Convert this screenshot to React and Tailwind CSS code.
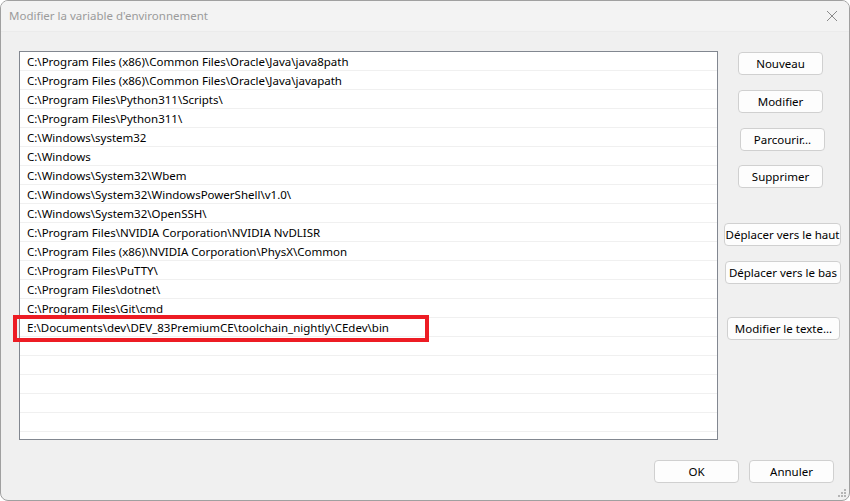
import React from "react";

const paths = [
  "C:\\Program Files (x86)\\Common Files\\Oracle\\Java\\java8path",
  "C:\\Program Files (x86)\\Common Files\\Oracle\\Java\\javapath",
  "C:\\Program Files\\Python311\\Scripts\\",
  "C:\\Program Files\\Python311\\",
  "C:\\Windows\\system32",
  "C:\\Windows",
  "C:\\Windows\\System32\\Wbem",
  "C:\\Windows\\System32\\WindowsPowerShell\\v1.0\\",
  "C:\\Windows\\System32\\OpenSSH\\",
  "C:\\Program Files\\NVIDIA Corporation\\NVIDIA NvDLISR",
  "C:\\Program Files (x86)\\NVIDIA Corporation\\PhysX\\Common",
  "C:\\Program Files\\PuTTY\\",
  "C:\\Program Files\\dotnet\\",
  "C:\\Program Files\\Git\\cmd",
  "E:\\Documents\\dev\\DEV_83PremiumCE\\toolchain_nightly\\CEdev\\bin",
];

const rows = [...paths, ...Array(21 - paths.length).fill("")];

const Btn = ({ children, className = "" }) => (
  <button
    className={`h-[23px] rounded-[4px] border border-[#d0d0d0] bg-[#fdfdfd] px-0 text-[11.5px] text-black leading-none whitespace-nowrap ${className}`}
  >
    {children}
  </button>
);

export default function App() {
  return (
    <div
      className="relative w-[850px] h-[501px] overflow-hidden rounded-[8px] border border-[#a0a0a0] bg-[#f0f0f0]"
      style={{ fontFamily: '"Noto Sans", "Open Sans", sans-serif' }}
    >
      {/* title bar */}
      <div className="h-[31px] flex items-center justify-between bg-[#f3f3f3] border-b border-[#ebebeb] pl-[8px] pr-[10px]">
        <span className="text-[11.5px] text-[#9b9b9b]">
          Modifier la variable d'environnement
        </span>
        <svg width="12" height="12" viewBox="0 0 12 12" className="mr-[1px]">
          <path d="M1 1L11 11M11 1L1 11" stroke="#8a8a8a" strokeWidth="1" />
        </svg>
      </div>

      <div className="flex pl-[18px] pt-[19px]">
        {/* path list */}
        <div className="w-[699px] h-[389px] border border-[#828790] bg-white overflow-hidden">
          {rows.map((p, i) => (
            <div
              key={i}
              className="h-[19px] border-b border-[#f0f0f0] pl-[7px] pt-[1px] text-[11.5px] leading-[18px] text-black whitespace-nowrap"
            >
              {p}
            </div>
          ))}
        </div>

        {/* action buttons */}
        <div className="flex flex-col items-start">
          <Btn className="w-[85px] ml-[20px] mt-[1px] h-[22px]">Nouveau</Btn>
          <Btn className="w-[85px] ml-[20px] mt-[15px] h-[22px]">Modifier</Btn>
          <Btn className="w-[85px] ml-[22px] mt-[15px]">Parcourir...</Btn>
          <Btn className="w-[85px] ml-[20px] mt-[14px]">Supprimer</Btn>
          <Btn className="w-[117px] ml-[6px] mt-[35px] h-[22px]">
            Déplacer vers le haut
          </Btn>
          <Btn className="w-[116px] ml-[7px] mt-[15px] h-[22px]">
            Déplacer vers le bas
          </Btn>
          <Btn className="w-[113px] ml-[9px] mt-[33px]">
            Modifier le texte...
          </Btn>
        </div>
      </div>

      {/* footer */}
      <div className="flex justify-end gap-[10px] pr-[15px] mt-[20px]">
        <Btn className="w-[85px]">OK</Btn>
        <Btn className="w-[85px]">Annuler</Btn>
      </div>

      {/* size grip */}
      <svg
        width="9"
        height="9"
        viewBox="0 0 9 9"
        className="absolute right-[2px] bottom-[2px]"
      >
        {[
          [6, 0],
          [3, 3],
          [6, 3],
          [0, 6],
          [3, 6],
          [6, 6],
        ].map(([x, y], i) => (
          <rect key={i} x={x} y={y} width="2" height="2" fill="#b5b5b5" />
        ))}
      </svg>

      {/* red annotation box */}
      <div className="absolute left-[12px] top-[314px] w-[416px] h-[27px] border-[4px] border-[#ed1c24] pointer-events-none" />
    </div>
  );
}
